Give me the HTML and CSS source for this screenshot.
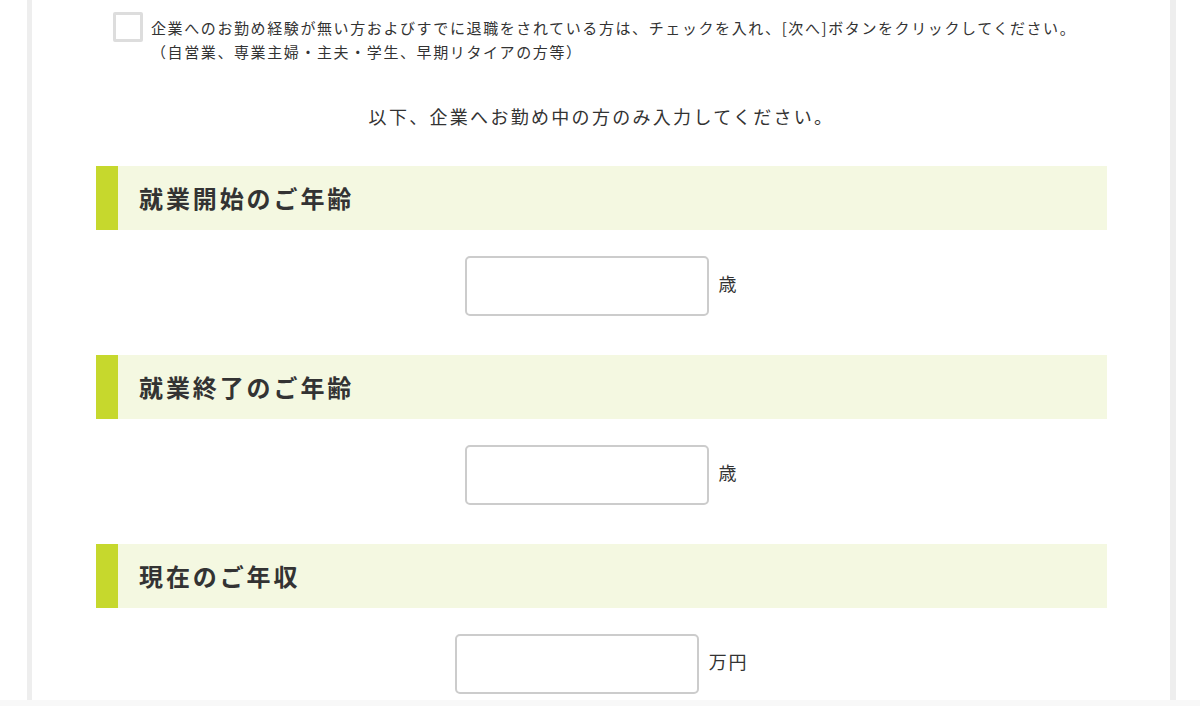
FILE: index.html
```html
<!DOCTYPE html>
<html lang="ja">
<head>
<meta charset="utf-8">
<title>フォーム</title>
<link rel="stylesheet" href="styles.css">
</head>
<body>
<div class="page">
  <div class="notice">
    <span class="checkbox"></span>
    <p class="notice-text">企業へのお勤め経験が無い方およびすでに退職をされている方は、チェックを入れ、[次へ]ボタンをクリックしてください。<br>（自営業、専業主婦・主夫・学生、早期リタイアの方等）</p>
  </div>
  <p class="lead">以下、企業へお勤め中の方のみ入力してください。</p>

  <h2 class="section-title">就業開始のご年齢</h2>
  <div class="field"><input class="text-input" type="text"><span class="unit">歳</span></div>

  <h2 class="section-title">就業終了のご年齢</h2>
  <div class="field"><input class="text-input" type="text"><span class="unit">歳</span></div>

  <h2 class="section-title">現在のご年収</h2>
  <div class="field"><input class="text-input" type="text"><span class="unit">万円</span></div>
</div>
<div class="footer-strip"></div>
</body>
</html>
```

FILE: styles.css
```css
html, body {
  margin: 0;
  padding: 0;
  background: #fff;
}
body {
  font-family: "Noto Sans CJK JP", "Noto Sans", sans-serif;
  color: #333;
}
.page {
  box-sizing: border-box;
  height: 700px;
  margin: 0 24px 0 27px;
  border-left: 5px solid #eeeeee;
  border-right: 6px solid #eeeeee;
  padding: 0 63px 0 64px;
  overflow: hidden;
}
.notice {
  display: flex;
  align-items: flex-start;
  padding: 12px 0 0 17px;
}
.checkbox {
  flex: none;
  box-sizing: border-box;
  width: 30px;
  height: 30px;
  border: 3px solid #dddddd;
  border-radius: 2px;
  background: #fff;
  margin-right: 8px;
}
.notice-text {
  margin: 4px 0 0;
  font-size: 15px;
  line-height: 24px;
  letter-spacing: 1.6px;
  white-space: nowrap;
}
.lead {
  margin: 37px 0 0;
  text-align: center;
  font-size: 18px;
  line-height: 30px;
  letter-spacing: 2.3px;
}
.section-title {
  margin: 35px 0 0;
  height: 64px;
  box-sizing: border-box;
  border-left: 22px solid #c6d82d;
  background: #f4f8e1;
  padding-left: 21px;
  font-size: 24px;
  line-height: 64px;
  font-weight: 700;
  letter-spacing: 2.9px;
  color: #333;
}
.field + .section-title {
  margin-top: 39px;
}
.field {
  display: flex;
  justify-content: center;
  align-items: center;
  margin-top: 26px;
}
.text-input {
  box-sizing: border-box;
  width: 244px;
  height: 60px;
  border: 2px solid #cccccc;
  border-radius: 5px;
  background: #fff;
  padding: 0 10px;
  font-size: 18px;
  outline: none;
}
.unit {
  margin-left: 10px;
  font-size: 18px;
  letter-spacing: 0.1em;
  line-height: 1;
  margin-top: -6px;
}
.footer-strip {
  height: 6px;
  background: #f8f8f8;
}
```
